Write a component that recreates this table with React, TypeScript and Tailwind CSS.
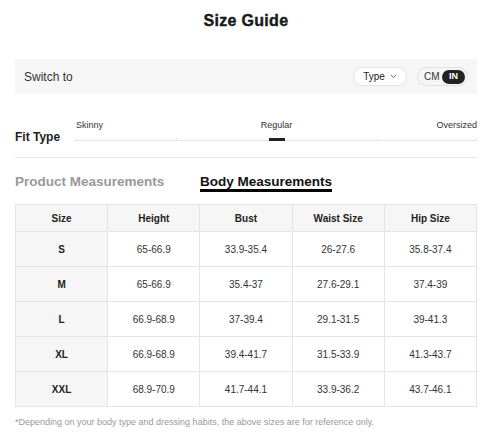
const rows = [
  { size: "S", height: "65-66.9", bust: "33.9-35.4", waist: "26-27.6", hip: "35.8-37.4" },
  { size: "M", height: "65-66.9", bust: "35.4-37", waist: "27.6-29.1", hip: "37.4-39" },
  { size: "L", height: "66.9-68.9", bust: "37-39.4", waist: "29.1-31.5", hip: "39-41.3" },
  { size: "XL", height: "66.9-68.9", bust: "39.4-41.7", waist: "31.5-33.9", hip: "41.3-43.7" },
  { size: "XXL", height: "68.9-70.9", bust: "41.7-44.1", waist: "33.9-36.2", hip: "43.7-46.1" },
];

const headers = ["Size", "Height", "Bust", "Waist Size", "Hip Size"];

// celda con borde gris claro, igual en cabecera y cuerpo
const cell = "border border-[#e5e5e5] text-center align-middle";

export default function App() {
  return (
    <div className="h-[433px] w-[487px] bg-white pl-[15px] pr-[10px] text-[#222] [font-family:'Liberation_Sans',Arial,sans-serif]">
      <h1 className="pt-[11px] text-center text-[16px] font-bold leading-[20px] tracking-[0.3px] text-[#1a1a1a] [-webkit-text-stroke:0.4px_#1a1a1a]">Size Guide</h1>

      {/* barra de unidades */}
      <div className="mt-[28px] flex h-[35px] items-center justify-between bg-[#f6f6f6] pl-[9px] pr-[9px]">
        <span className="text-[12px] text-[#333]">Switch to</span>
        <div className="flex items-center gap-[10px]">
          <button className="flex h-[19px] w-[54px] items-center justify-center gap-[5px] rounded-full border border-[#e5e5e5] bg-white text-[10px] text-[#222]">
            Type
            <svg width="7" height="5" viewBox="0 0 7 5" fill="none">
              <path d="M0.8 1 L3.5 3.6 L6.2 1" stroke="#555" strokeWidth="0.9" />
            </svg>
          </button>
          <div className="flex h-[19px] w-[51px] items-center rounded-full border border-[#e0e0e0] pl-[6px] pr-[2px]">
            <span className="text-[10px] text-[#333]">CM</span>
            <span className="ml-auto flex h-[14px] w-[23px] items-center justify-center rounded-full bg-[#222] text-[9px] font-bold text-white">IN</span>
          </div>
        </div>
      </div>

      {/* tipo de ajuste */}
      <div className="flex items-end">
        <div className="w-[61px] text-[12px] font-bold leading-[14px] text-[#222]">Fit Type</div>
        <div className="flex-1 pb-[3px] pt-[25px]">
          <div className="grid grid-cols-3 text-[9px] leading-[12px] text-[#333]">
            <span className="text-left">Skinny</span>
            <span className="text-center">Regular</span>
            <span className="text-right">Oversized</span>
          </div>
          <div className="relative mt-[9px] h-px bg-[#e5e5e5]">
            <span className="absolute bottom-0 left-0 h-[3px] w-px bg-[#e5e5e5]" />
            <span className="absolute bottom-0 left-1/4 h-[3px] w-px bg-[#e5e5e5]" />
            <span className="absolute bottom-0 left-3/4 h-[3px] w-px bg-[#e5e5e5]" />
            <span className="absolute bottom-0 right-0 h-[3px] w-px bg-[#e5e5e5]" />
            <span className="absolute bottom-0 left-1/2 h-[3px] w-[16px] -translate-x-1/2 bg-[#222]" />
          </div>
        </div>
      </div>

      <div className="mt-[13px] h-px bg-[#e8e8e8]" />

      {/* pestañas */}
      <div className="mt-[17px] flex text-[13.5px] font-bold leading-[14px]">
        <span className="w-[185px] text-[#999]">Product Measurements</span>
        <span className="border-b-[3px] border-black text-[#111]">Body Measurements</span>
      </div>

      <table className="mt-[12px] w-full table-fixed border-collapse text-[10px]">
        <thead>
          <tr className="h-[27px] bg-[#f6f6f6]">
            {headers.map((h) => (
              <th key={h} className={`${cell} font-bold text-[#222]`}>{h}</th>
            ))}
          </tr>
        </thead>
        <tbody>
          {rows.map((r) => (
            <tr key={r.size} className="h-[35px]">
              <td className={`${cell} bg-[#f6f6f6] font-bold text-[#222]`}>{r.size}</td>
              <td className={`${cell} text-[#333]`}>{r.height}</td>
              <td className={`${cell} text-[#333]`}>{r.bust}</td>
              <td className={`${cell} text-[#333]`}>{r.waist}</td>
              <td className={`${cell} text-[#333]`}>{r.hip}</td>
            </tr>
          ))}
        </tbody>
      </table>

      <p className="mt-[9px] text-[9px] leading-[12px] text-[#999]">
        *Depending on your body type and dressing habits, the above sizes are for reference only.
      </p>
    </div>
  );
}
